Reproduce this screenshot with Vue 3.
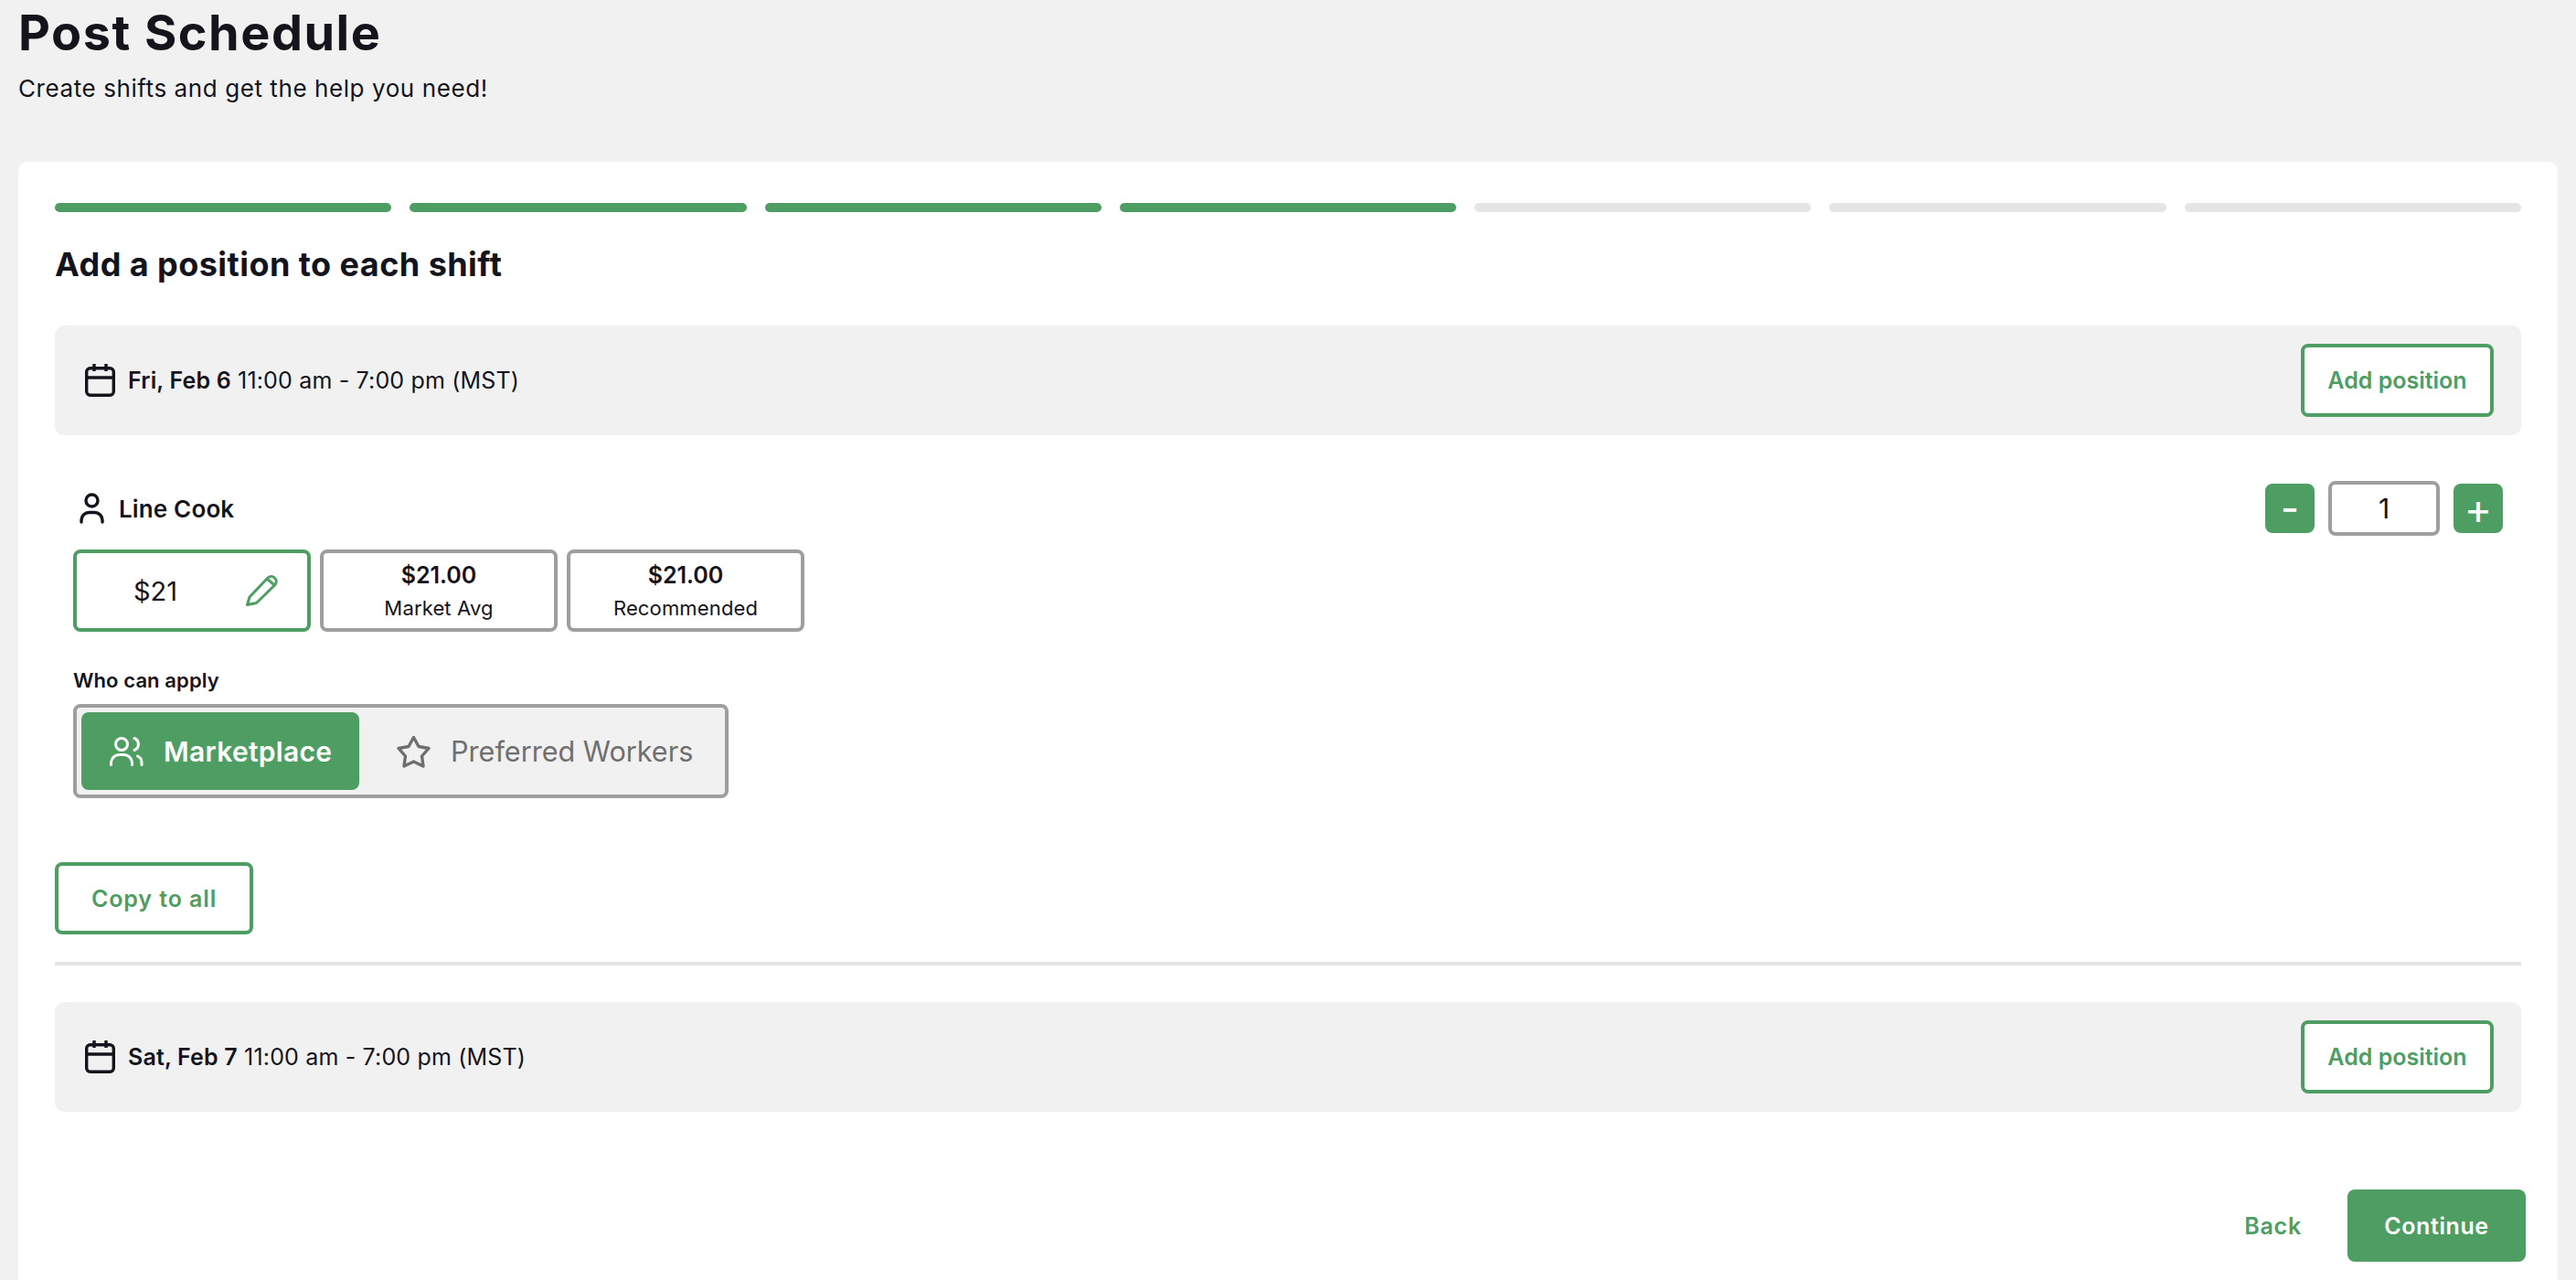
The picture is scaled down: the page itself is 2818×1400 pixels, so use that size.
<script setup>
const bars = [1, 1, 1, 1, 0, 0, 0]
</script>

<template>
  <div class="page">
    <header class="head">
      <h1>Post Schedule</h1>
      <p>Create shifts and get the help you need!</p>
    </header>
    <main class="card">
      <div class="bars">
        <span v-for="(b, i) in bars" :key="i" class="bar" :class="{ on: b }"></span>
      </div>
      <h2>Add a position to each shift</h2>

      <section class="band">
        <div class="when">
          <svg class="cal" viewBox="0 0 33 36" fill="none" stroke="#14141c" stroke-width="3.4"><rect x="1.700" y="4.800" width="29.600" height="29.500" rx="4"/><path d="M1.700 15h29.600M10 0v8M23 0v8"/></svg>
          <span><b>Fri, Feb 6</b> 11:00 am - 7:00 pm (MST)</span>
        </div>
        <button class="btn outline">Add position</button>
      </section>

      <section class="pos">
        <div class="pos-top">
          <div class="role">
            <svg class="user" viewBox="0 0 27 34" fill="none" stroke="#14141c" stroke-width="3.4" stroke-linecap="round"><circle cx="13.500" cy="8.500" r="6.500"/><path d="M2 32v-2a8.500 8.500 0 0 1 8.500-8.500h6a8.500 8.500 0 0 1 8.500 8.500v2"/></svg>
            <span>Line Cook</span>
          </div>
          <div class="stepper">
            <button class="step minus">–</button>
            <div class="qty">1</div>
            <button class="step plus">+</button>
          </div>
        </div>
        <div class="prices">
          <div class="price active">
            <span class="val">$21</span>
            <svg class="pencil" viewBox="0 0 37 36" fill="none" stroke="#4e9d63" stroke-width="3" stroke-linejoin="round"><path d="M2.500 33.500L5 25 25 4a5.500 5.500 0 0 1 8 7.500L12.500 31.500z"/><path d="M24.500 5.500l8.500 7"/></svg>
          </div>
          <div class="price"><b>$21.00</b><small>Market Avg</small></div>
          <div class="price"><b>$21.00</b><small>Recommended</small></div>
        </div>
        <div class="label">Who can apply</div>
        <div class="toggle">
          <div class="seg sel">
            <svg class="ico" viewBox="0 0 37 34" fill="none" stroke="#fff" stroke-width="3" stroke-linecap="round"><circle cx="13" cy="9" r="6.500"/><path d="M1.500 31.500v-2a9 9 0 0 1 9-9h5a9 9 0 0 1 9 9v2M27 2.500a7 7 0 0 1 0 13M30.500 22a7.500 7.500 0 0 1 4.500 7v2.500"/></svg>
            <span>Marketplace</span>
          </div>
          <div class="seg">
            <svg class="ico star" viewBox="0 0 37 36" fill="none" stroke="#6f6f6f" stroke-width="3.400" stroke-linejoin="round"><path d="M18.500 2.500L24 12.500 35 14.500 27.500 23 29 34 18.500 29 8 34 9.500 23 2 14.500 13 12.500z"/></svg>
            <span>Preferred Workers</span>
          </div>
        </div>
      </section>

      <button class="btn outline copy">Copy to all</button>
      <hr class="rule" />

      <section class="band">
        <div class="when">
          <svg class="cal" viewBox="0 0 33 36" fill="none" stroke="#14141c" stroke-width="3.4"><rect x="1.700" y="4.800" width="29.600" height="29.500" rx="4"/><path d="M1.700 15h29.600M10 0v8M23 0v8"/></svg>
          <span><b>Sat, Feb 7</b> 11:00 am - 7:00 pm (MST)</span>
        </div>
        <button class="btn outline">Add position</button>
      </section>

      <footer class="foot">
        <button class="back">Back</button>
        <button class="btn solid">Continue</button>
      </footer>
    </main>
  </div>
</template>

<style>
html, body { margin: 0; overflow: hidden; background: #f1f1f1; }
</style>

<style scoped>
.page { font-family: Inter, "Open Sans", sans-serif; color: #14141c; width: 2818px; box-sizing: border-box; padding: 0 20px; }
button { font-family: inherit; cursor: pointer; }
h1 { margin: 0; font-size: 54px; line-height: 72px; font-weight: 700; letter-spacing: 1.500px; }
.head p { margin: 5px 0 0; font-size: 26px; line-height: 40px; font-weight: 400; letter-spacing: .58px; }
.card { margin-top: 60px; background: #fff; border-radius: 10px; padding: 45px 40px 40px; }
.bars { display: flex; gap: 20px; }
.bar { flex: 1; height: 10px; border-radius: 5px; background: #e5e5e5; }
.bar.on { background: #4e9d63; }
h2 { margin: 35px 0 45px; font-size: 36px; line-height: 44px; font-weight: 700; letter-spacing: .45px; }
.band { height: 120px; box-sizing: border-box; background: #f1f1f1; border-radius: 10px; padding: 0 30px 0 33px; display: flex; align-items: center; justify-content: space-between; }
.when { display: flex; align-items: center; gap: 14px; font-size: 25px; letter-spacing: .17px; }
.when b { font-weight: 600; }
.cal { width: 33px; height: 36px; }
.btn { box-sizing: border-box; border-radius: 8px; font-size: 25px; font-weight: 600; display: flex; align-items: center; justify-content: center; }
.outline { width: 211px; height: 80px; background: #fff; border: 4px solid #4e9d63; color: #4e9d63; }
.pos { padding: 50px 20px 0; }
.pos-top { display: flex; align-items: center; justify-content: space-between; height: 60px; }
.role { display: flex; align-items: center; gap: 16px; padding-left: 7px; font-size: 26px; font-weight: 600; letter-spacing: .15px; }
.user { width: 27px; height: 34px; }
.stepper { display: flex; align-items: center; gap: 15px; }
.step { width: 54px; height: 54px; border: 0; border-radius: 8px; background: #4e9d63; color: #fff; padding: 0; display: flex; align-items: center; justify-content: center; line-height: 1; }
.minus { font-size: 28px; font-weight: 800; }
.plus { font-size: 46px; font-weight: 400; }
.qty { width: 122px; height: 60px; box-sizing: border-box; border: 4px solid #9e9e9e; border-radius: 8px; font-size: 30px; display: flex; align-items: center; justify-content: center; }
.prices { display: flex; gap: 10px; margin-top: 15px; }
.price { box-sizing: border-box; width: 260px; height: 90px; border: 4px solid #9e9e9e; border-radius: 8px; display: flex; flex-direction: column; align-items: center; justify-content: center; }
.price b { font-size: 25px; font-weight: 600; line-height: 34px; }
.price small { font-size: 22px; line-height: 32px; margin-top: 3px; letter-spacing: .15px; }
.price.active { border-color: #4e9d63; flex-direction: row; justify-content: space-between; padding: 0 31px 0 62px; }
.val { font-size: 29px; }
.pencil { width: 37px; height: 36px; }
.label { margin-top: 38px; font-size: 22px; line-height: 30px; font-weight: 600; letter-spacing: .1px; }
.toggle { margin-top: 11px; box-sizing: border-box; width: 717px; height: 103px; border: 4px solid #9e9e9e; border-radius: 8px; padding: 5px; background: #f1f1f1; display: flex; font-size: 30.600px; color: #6f6f6f; }
.seg { display: flex; align-items: center; gap: 22px; padding-left: 41px; }
.seg.sel { width: 304px; box-sizing: border-box; padding-left: 31px; background: #4e9d63; border-radius: 8px; color: #fff; font-weight: 600; font-size: 30px; letter-spacing: .3px; }
.ico { width: 37px; height: 34px; }
.ico.star { height: 36px; }
.copy { width: 217px; height: 79px; margin-top: 70px; letter-spacing: .9px; }
.rule { margin: 30px 0 40px; height: 4px; border: 0; background: #e5e5e5; }
.foot { display: flex; justify-content: flex-end; align-items: center; margin: 85px -5px 0 0; }
.back { border: 0; background: none; color: #4e9d63; font-size: 25px; font-weight: 600; letter-spacing: .8px; padding: 0; margin-right: 50px; }
.solid { width: 195px; height: 79px; border: 0; background: #4e9d63; color: #fff; letter-spacing: .6px; }
</style>
